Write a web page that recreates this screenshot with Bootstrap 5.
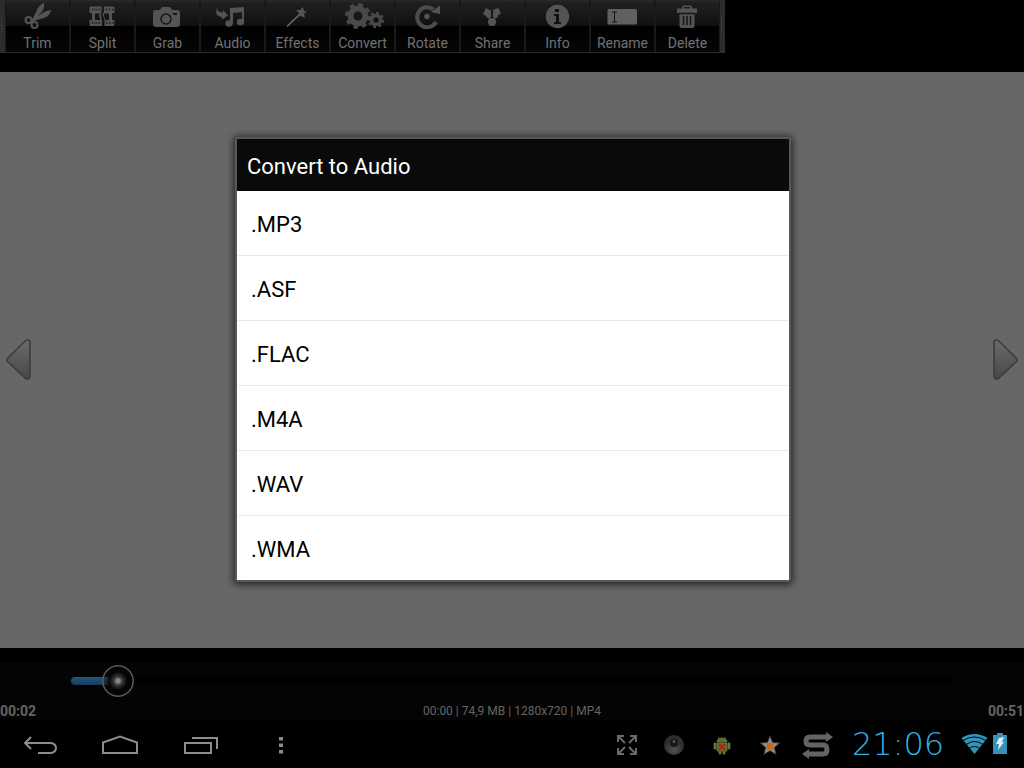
<!DOCTYPE html>
<html lang="en">
<head>
<meta charset="utf-8">
<meta name="viewport" content="width=device-width, initial-scale=1">
<title>Convert to Audio</title>
<link href="https://cdn.jsdelivr.net/npm/bootstrap@5.3.0/dist/css/bootstrap.min.css" rel="stylesheet">
<style>
body{font-family:Roboto,"Noto Sans",sans-serif;background:#000}
svg{display:block}
.plain{background:none;border:0;padding:0}
.tools{border-bottom:1px solid #2c2c2c}
.grip{width:5px;background:#2c2c2c}
.grip span{width:3px;height:22px;background:radial-gradient(circle,#484848 1px,transparent 1px) 0 0/3px 3px}
.tool{width:65px;height:52px;background:linear-gradient(#2a2a2a 0,#1f1f1f 3px,#101010 26px,#000 26px,#060606 100%);border:1px solid #191919;border-top:0;border-bottom:0;color:#727272;font-size:14px;line-height:18px}
.tool svg{width:65px;height:34px;margin-left:-1px;fill:#545454}
.tools-wrap{height:72px}
.stage{background:#676767;padding:64px 0 66px}
.arrow-l{width:38px}.arrow-r{width:36px}
.dialog-box{width:556px;max-width:100%;border:2px solid #585858;border-radius:3px;box-shadow:0 1px 7px 2px rgba(0,0,0,.6);background:#fff}
.dialog-head{background:#0a0a0a;color:#fff;font-size:22px;line-height:26px;padding:15px 10px 11px;margin:0;font-weight:400}
.fmt{color:#000;font-size:22px;line-height:26px;padding:21px 14px 17px;border:0;border-bottom:1px solid #e9e9e9}
.fmt:last-child{border-bottom:0}
.player{margin-top:14px;background:#040404;color:#656565}
.seek-row{height:38px;padding:0 72px 0 71px}
.seek{appearance:none;-webkit-appearance:none;background:none;height:32px;margin:0}
.seek::-webkit-slider-runnable-track{height:8px;border-radius:4px;background:linear-gradient(#235a7d,#183a5c) 0 0/38px 8px no-repeat #000}
.seek::-webkit-slider-thumb{-webkit-appearance:none;width:32px;height:32px;margin-top:-12px;border-radius:50%;border:0;background:radial-gradient(circle,#858585 0 2px,#3c3c3c 4px,rgba(6,6,6,.9) 9px,rgba(6,6,6,.3) 13px,rgba(6,6,6,.3) 14px,#626262 15px,#4a4a4a 16px)}
.times{font-size:14px;line-height:18px;font-weight:700;padding-top:2px}
.meta-line{font-size:12px;font-weight:400}
.sysbar{height:48px}
.nav-key{width:80px;height:48px}
.tray{width:48px;height:48px}
.clock{font-family:"DejaVu Sans Light","DejaVu Sans",sans-serif;font-weight:200;font-size:32px;line-height:48px;color:#33b0e0;width:109px;margin-left:10px;white-space:nowrap}
.line{fill:none;stroke:#8c8c8c;stroke-width:2}
</style>
</head>
<body class="d-flex flex-column min-vh-100">
<header class="tools-wrap">
<nav class="tools d-inline-flex align-items-stretch" aria-label="Editing tools">
<div class="grip d-flex align-items-center"><span></span></div>
<button class="plain tool"><svg viewBox="0 0 65 34"><path d="M39 3q1 6-4 11l-4 6-3-2 4-8q2-5 7-7zM46 10q-1 6-7 8-4 1-7 2l-5 2-1-3 8-3q4-5 12-6z"/><g fill="none" stroke="#545454" stroke-width="2"><circle cx="23.500" cy="20" r="3"/><circle cx="29.500" cy="25" r="3"/></g></svg>Trim</button>
<button class="plain tool"><svg viewBox="0 0 65 34"><path d="M21 6.500h10.500V12l-1 2 1.500 6v6H21q-1.500 0-1.500-1.500V20H22v-7h-2.500V8q0-1.500 1.500-1.500zM34 6.500h9q1.500 0 1.500 1.500v5H42v7h2.500v4.500q0 1.500-1.500 1.500h-8.500v-6l-2-6 1.500-2z"/><path d="M25 13.500h4.500L29 16l1.500 4H25zM34 13.500h5V20h-3.500L34 16z" fill="#151515"/><path d="M22 9.500h8M35.500 9.500h8M22 23h8M36 23h8" stroke="#151515" stroke-width="1.500" stroke-dasharray="1.500 1.800"/></svg>Split</button>
<button class="plain tool"><svg viewBox="0 0 65 34"><path d="M27 7h8l2 3h5q3 0 3 3v11q0 3-3 3H21q-3 0-3-3V13q0-3 3-3h4z"/><circle cx="31" cy="19" r="5" fill="none" stroke="#151515" stroke-width="1.500"/><path d="M37 13h5v2h-3z" fill="#151515"/></svg>Grab</button>
<button class="plain tool"><svg viewBox="0 0 65 34"><path d="M17.500 7q-1.500 5 5.500 5.500V10l5 5.500-6 4V17q-8.500-1-4.500-10zM30 8l14-1v15.500h-2V12l-9 1v11h-3z"/><ellipse cx="29" cy="23.500" rx="3.700" ry="3.300"/><ellipse cx="40.500" cy="22" rx="3.700" ry="3.300"/></svg>Audio</button>
<button class="plain tool"><svg viewBox="0 0 65 34"><path d="M22 26.500 35 14" stroke="#707070" stroke-width="1.500"/><path d="m38 7 1 4 3 .5-3 2.500 1 4-4-2-4 1 2-4-3-3h4z"/></svg>Effects</button>
<button class="plain tool"><svg viewBox="0 0 65 34"><g fill="none" stroke="#494949"><circle cx="28" cy="16" r="7.500" stroke-width="6"/><circle cx="28" cy="16" r="11.500" stroke-width="3" stroke-dasharray="4.500 4.532"/><circle cx="46" cy="20" r="4.500" stroke-width="3.500"/><circle cx="46" cy="20" r="7" stroke-width="2.500" stroke-dasharray="2.700 2.798"/></g></svg>Convert</button>
<button class="plain tool"><svg viewBox="0 0 65 34"><path d="M41 22a10 10 0 1 1-2.500-12.500" fill="none" stroke="#4c4c4c" stroke-width="4"/><path d="M45 5.500v8.500l-9-2z"/><circle cx="32" cy="16.500" r="2.700"/></svg>Rotate</button>
<button class="plain tool"><svg viewBox="0 0 65 34"><circle cx="32" cy="22" r="4"/><path d="m23 14 3-6 5 2.500v6L29 19l-5-4.500zM41 14l-2.500-6-6 2 1 2-1 4 2 3 3-1.500 1-3z"/></svg>Share</button>
<button class="plain tool"><svg viewBox="0 0 65 34"><circle cx="32.500" cy="16.500" r="11.700"/><path d="M30 9h4v3h-4zM29 14h5v8h2v2h-7v-2h2v-6h-2z" fill="#111"/></svg>Info</button>
<button class="plain tool"><svg viewBox="0 0 65 34"><rect x="17.500" y="9" width="29.500" height="15.500" rx="1.500" fill="#606060"/><path d="M22 12h5M24.500 12v10M22 22h5" stroke="#151515" fill="none"/></svg>Rename</button>
<button class="plain tool"><svg viewBox="0 0 65 34"><path d="M22 8.500h5V7q0-1.500 2-1.500h6q2 0 2 1.500v1.500h5V13H22zm7 0h6V7h-6zM24.500 13h15v13q0 2-2 2h-11q-2 0-2-2z"/><path d="M24 13.500h16M28.500 16v9M32 16v9M35.500 16v9" stroke="#151515" stroke-width="1.500"/></svg>Delete</button>
<div class="grip d-flex align-items-center"><span></span></div>
</nav>
</header>

<main class="stage flex-grow-1 d-flex align-items-center">
<button class="plain arrow-l flex-shrink-0" aria-label="Previous"><svg width="38" height="46"><defs><linearGradient id="ar" x2="0" y2="1"><stop stop-color="#6a6a6a"/><stop offset="1" stop-color="#484848"/></linearGradient></defs><path d="M7 23 25 5q5-3 5 2v33q0 5-5 2L7 25z" fill="url(#ar)" stroke="#3a3a3a" stroke-width="1.500"/></svg></button>
<div class="flex-grow-1 d-flex justify-content-center">
<section class="dialog-box" role="dialog" aria-labelledby="dlg">
<h1 class="dialog-head" id="dlg">Convert to Audio</h1>
<div class="list-group list-group-flush rounded-0">
<button class="list-group-item list-group-item-action fmt">.MP3</button>
<button class="list-group-item list-group-item-action fmt">.ASF</button>
<button class="list-group-item list-group-item-action fmt">.FLAC</button>
<button class="list-group-item list-group-item-action fmt">.M4A</button>
<button class="list-group-item list-group-item-action fmt">.WAV</button>
<button class="list-group-item list-group-item-action fmt">.WMA</button>
</div>
</section>
</div>
<button class="plain arrow-r flex-shrink-0" aria-label="Next"><svg width="36" height="46"><path d="M29 23 11 5q-5-3-5 2v33q0 5 5 2l18-17z" fill="url(#ar)" stroke="#3a3a3a" stroke-width="1.500"/></svg></button>
</main>

<section class="player">
<div class="seek-row d-flex align-items-center"><input class="seek w-100" type="range" min="0" max="1000" value="37" aria-label="Position"></div>
<div class="times d-flex justify-content-between"><span>00:02</span><span class="meta-line">00:00 | 74,9 MB | 1280x720 | MP4</span><span>00:51</span></div>
</section>

<footer class="sysbar d-flex align-items-center">
<button class="plain nav-key" aria-label="Back"><svg class="line" width="80" height="48"><path d="m31 17-6 6 6 6M25 23h26q5 1 5 5t-5 5H38"/></svg></button>
<button class="plain nav-key" aria-label="Home"><svg class="line" width="80" height="48"><path d="M23 22.500 40 16.500l17 6V33H23z"/></svg></button>
<button class="plain nav-key" aria-label="Recent apps"><svg class="line" width="80" height="48"><path d="M25 23h26v10H25zM32 18h25v11"/></svg></button>
<button class="plain nav-key me-auto" aria-label="Menu"><svg width="80" height="48" fill="#8c8c8c"><path d="M39 17h4v3.500h-4zM39 23.500h4V27h-4zM39 30h4v3.500h-4z"/></svg></button>
<button class="plain tray" aria-label="Full screen"><svg width="48" height="48" fill="none" stroke="#676b67" stroke-width="2"><path d="M16 22v-6h6M16 16l7 7M28 16h6v6M34 16l-7 7M16 28v6h6M16 34l7-7M28 34h6v-6M34 34l-7-7"/></svg></button>
<button class="plain tray" aria-label="Camera"><svg width="48" height="48"><defs><radialGradient id="bl" cx=".5" cy=".75"><stop stop-color="#505050"/><stop offset="1" stop-color="#2e2e2e"/></radialGradient></defs><circle cx="24" cy="25" r="10" fill="url(#bl)"/><circle cx="24" cy="23" r="4" fill="#171717"/><circle cx="24" cy="21.500" r="1.500" fill="#555"/></svg></button>
<button class="plain tray" aria-label="Debug"><svg width="48" height="48"><path d="M19 22q0-4 5-4t5 4zM19 23h10v8h-2v3h-2v-3h-2v3h-2v-3h-2zM16 23h2v6h-2zM30 23h2v6h-2zM20 17l2 2M28 17l-2 2" fill="#577027" stroke="#72854a" stroke-width=".7"/><path d="m21 24 6 6m0-6-6 6" stroke="#b52318" stroke-width="2"/></svg></button>
<button class="plain tray" aria-label="Favourites"><svg width="48" height="48"><path d="m24 16 2.700 6.500 7 .5-5.300 4.500 1.700 7-6.100-3.700-6.100 3.700 1.700-7-5.300-4.500 7-.5z" fill="#909090" stroke="#333"/><circle cx="24" cy="26.500" r="3.700" fill="#c56b14"/></svg></button>
<button class="plain tray" aria-label="Switch"><svg width="48" height="48"><path d="M33 17H16q-4 0-4 4t4 4h13q4 0 4 4.500T29 34H14" fill="none" stroke="#646464" stroke-width="5"/><path d="m32 12 7 5-7 5zM15 29l-7 5 7 5z" fill="#646464"/></svg></button>
<time class="clock">21:06</time>
<svg class="flex-shrink-0" width="27" height="48" role="img" aria-label="Wi-Fi"><path d="M13.500 34 .5 18q13-8 26 0z" fill="#3393bb"/><path d="M2 20.500q11.500-7 23 0M5 24.500q8.500-6 17 0M8 28.500q5.500-4 11 0" fill="none" stroke="#000" stroke-width="1"/></svg>
<svg class="flex-shrink-0 ms-1" width="32" height="48" role="img" aria-label="Battery charging"><path d="M5 13h6v2h4v19H1V15h4z" fill="#3393bb"/><path d="m7 18 5-1-2 5h2l-6 8 1-6H4z" fill="#e2f0f6"/></svg>
</footer>
<script src="https://cdn.jsdelivr.net/npm/bootstrap@5.3.0/dist/js/bootstrap.bundle.min.js"></script>
</body>
</html>
